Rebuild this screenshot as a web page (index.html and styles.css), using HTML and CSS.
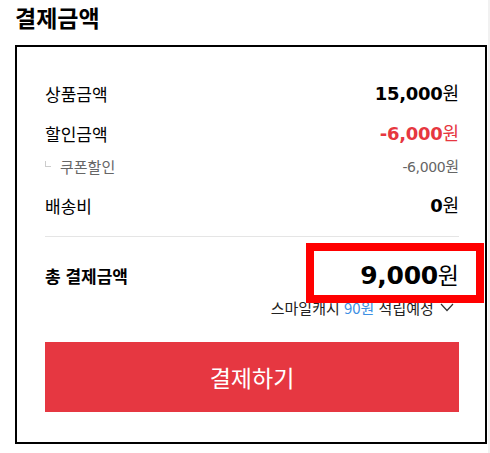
FILE: index.html
```html
<!DOCTYPE html>
<html lang="ko">
<head>
    <meta charset="UTF-8">
    <title>결제금액</title>
    <link rel="stylesheet" href="styles.css">
</head>
<body>
<div class="page">
    <h2 class="pay-title">결제금액</h2>
    <div class="pay-box">
        <ul class="pay-list">
            <li class="pay-row">
                <span class="label">상품금액</span>
                <span class="price"><em>15,000</em>원</span>
            </li>
            <li class="pay-row discount">
                <span class="label">할인금액</span>
                <span class="price"><em>-6,000</em>원</span>
            </li>
            <li class="pay-row sub">
                <span class="label"><i class="corner"></i>쿠폰할인</span>
                <span class="price"><em>-6,000</em>원</span>
            </li>
            <li class="pay-row">
                <span class="label">배송비</span>
                <span class="price"><em>0</em>원</span>
            </li>
        </ul>
        <div class="pay-total">
            <span class="label">총 결제금액</span>
            <span class="price"><em>9,000</em>원</span>
        </div>
        <p class="pay-point">스마일캐시 <b>90원</b> 적립예정
            <svg width="14" height="9" viewBox="0 0 14 9"><polyline points="1,1 7,7.5 13,1" fill="none" stroke="#333" stroke-width="1.2"/></svg>
        </p>
        <button class="pay-btn">결제하기</button>
        <div class="mark"></div>
    </div>
</div>
</body>
</html>
```
FILE: styles.css
```css
*{
    margin: 0;
    padding: 0;
    box-sizing: border-box;
}
html{
    background: #f1f1f1;
}
body{
    font-family: "Noto Sans CJK KR", "DejaVu Sans", sans-serif;
    color: #000;
}
li{
    list-style: none;
}
em{
    font-style: normal;
}
.page{
    width: 488px;
    height: 453px;
    background: #fff;
    padding-left: 15px;
}
.pay-title{
    font-size: 23px;
    font-weight: bold;
    line-height: 34px;
    padding: 0 0 11px 0;
}
.pay-box{
    position: relative;
    width: 472px;
    border: 2px solid #000;
    padding: 34px 26px 30px 28px;
}
.pay-row,
.pay-total{
    display: flex;
    justify-content: space-between;
    align-items: center;
}
.pay-row{
    height: 24px;
    margin-bottom: 16px;
}
.pay-row .label{
    font-size: 17px;
}
.price{
    font-size: 18px;
    line-height: 24px;
}
.price em{
    font-family: "DejaVu Sans", sans-serif;
    font-weight: bold;
    letter-spacing: -0.3px;
}
.pay-row.discount{
    margin-bottom: 11px;
}
.discount .price{
    color: #e63740;
}
.pay-row.sub{
    height: 20px;
    margin-bottom: 17px;
    color: #666;
}
.sub .label{
    font-size: 15px;
    display: flex;
    align-items: center;
}
.sub .price{
    font-size: 15px;
}
.sub .price em{
    font-weight: normal;
    font-size: 14px;
    letter-spacing: -0.4px;
}
.corner{
    display: inline-block;
    width: 6px;
    height: 6px;
    border-left: 1px solid #ccc;
    border-bottom: 1px solid #ccc;
    margin: 0 9px 4px 0;
}
.pay-list{
    border-bottom: 1px solid #e5e5e5;
    padding-bottom: 2px;
    margin-bottom: 21px;
}
.pay-list .pay-row:last-child{
    margin-bottom: 17px;
}
.pay-total{
    height: 34px;
}
.pay-total .label{
    font-size: 17px;
    font-weight: bold;
}
.pay-total .price{
    font-size: 23px;
    line-height: 34px;
}
.pay-total .price em{
    font-size: 25px;
}
.pay-point{
    margin-top: 6px;
    height: 20px;
    line-height: 20px;
    text-align: right;
    font-size: 15px;
    color: #222;
    padding-right: 5px;
}
.pay-point b{
    font-weight: normal;
    color: #3d8fe3;
}
.pay-point svg{
    margin-left: 2px;
    vertical-align: 2px;
}
.pay-btn{
    display: block;
    width: 100%;
    height: 70px;
    margin-top: 24px;
    border: 0;
    background: #e63741;
    color: #fff;
    font-family: "Noto Sans CJK KR", sans-serif;
    font-size: 23px;
    cursor: pointer;
}
.mark{
    position: absolute;
    left: 289px;
    top: 196px;
    width: 178px;
    height: 60px;
    border: 8px solid #f00;
}
```
